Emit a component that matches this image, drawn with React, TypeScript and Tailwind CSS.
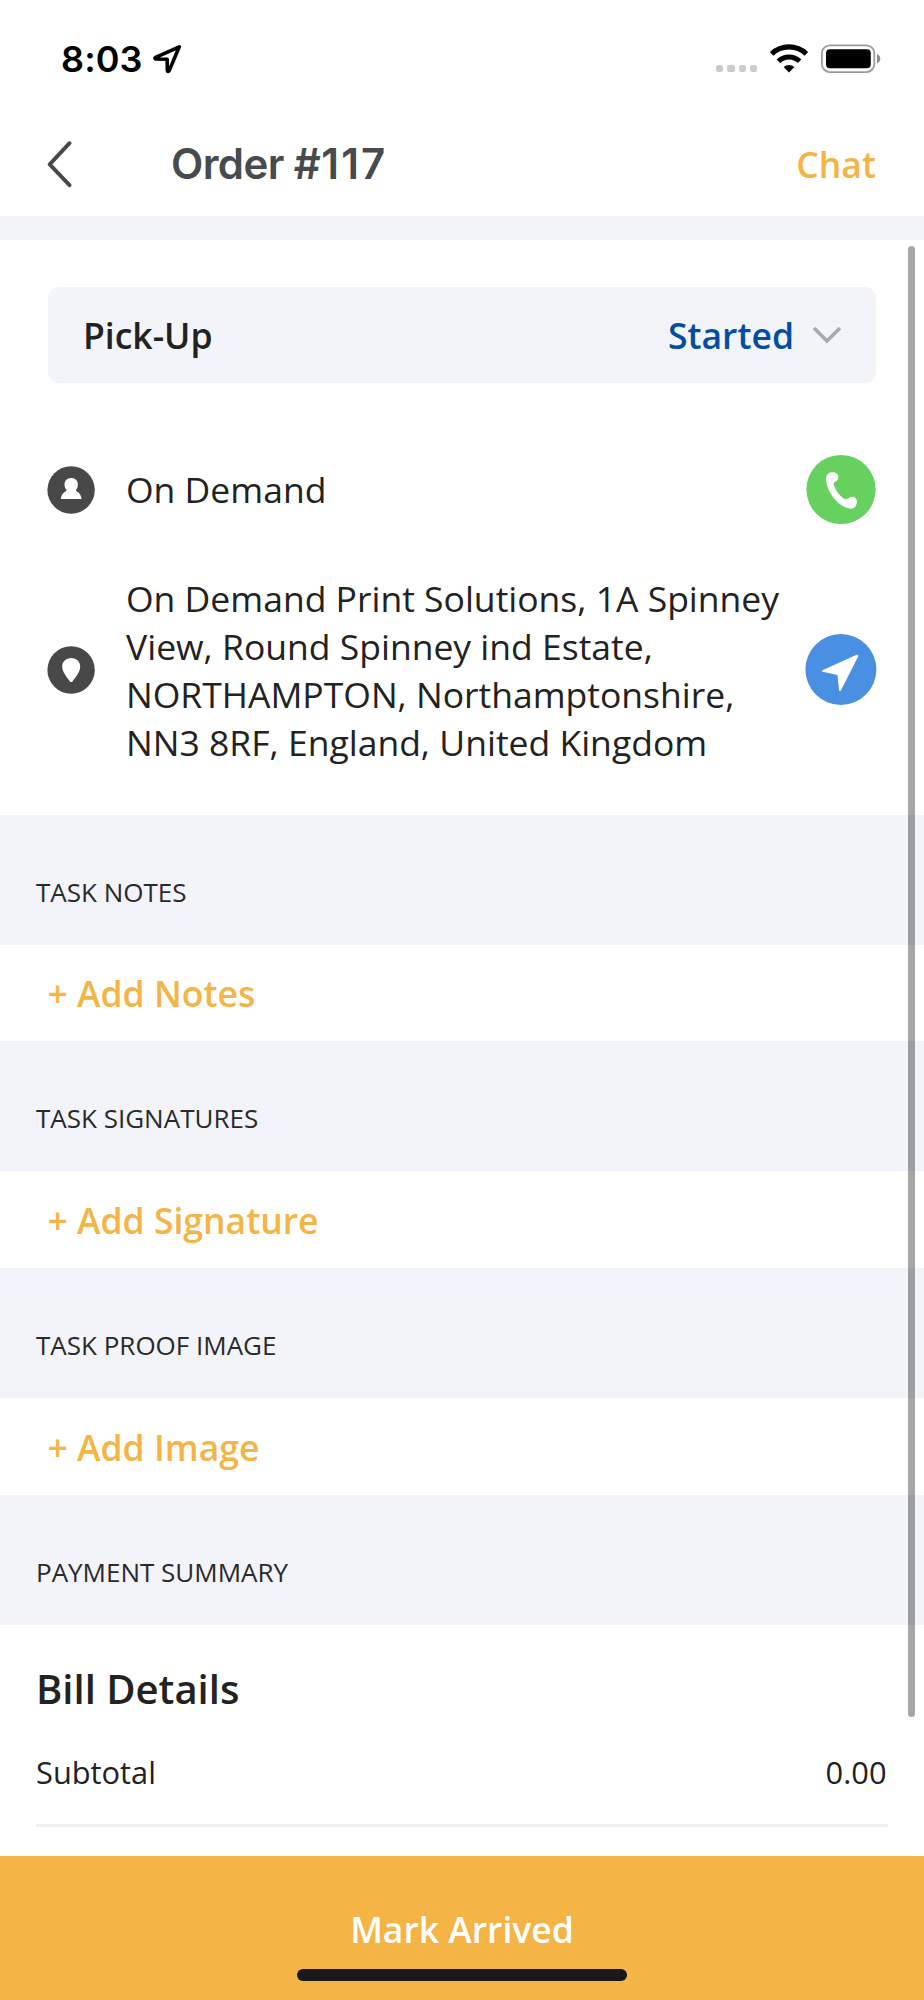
import { useState } from 'react'

interface TaskSection {
  title: string
  action: string
}

const SECTIONS: TaskSection[] = [
  { title: 'TASK NOTES', action: 'Add Notes' },
  { title: 'TASK SIGNATURES', action: 'Add Signature' },
  { title: 'TASK PROOF IMAGE', action: 'Add Image' },
]

function StatusBar() {
  return (
    <div className="flex h-[118px] items-center pl-[61px] pr-[43px] font-['Inter',sans-serif]">
      <span className="text-[36px] leading-none font-semibold tracking-[0.1px] text-black">8:03</span>
      <svg className="ml-[10px]" width="30" height="30" viewBox="0 0 30 30" fill="none">
        <path
          d="M26.3 2.8 2.6 13.3c-1 .6-.7 1.6.3 1.7l11.3.3.1 11c.1 1.3 1.3 1.4 1.9.3Z"
          stroke="#000"
          strokeWidth="3.6"
          strokeLinejoin="round"
        />
      </svg>

      <div className="ml-auto flex items-center">
        <div className="mt-[19px] flex gap-[4px]">
          {[0, 1, 2, 3].map(i => (
            <span key={i} className="h-[7px] w-[7.2px] rounded-[2.5px] bg-[#cbcbcb]" />
          ))}
        </div>
        <svg className="ml-[13px]" width="38" height="30" viewBox="0 0 38 30" fill="none" stroke="#000">
          <path d="M1.6 10a25 25 0 0 1 34.8 0" strokeWidth="5.2" />
          <path d="M8.4 17.2a15.4 15.4 0 0 1 21.2 0" strokeWidth="5" />
          <path d="M19 28.4l-5.4-5.4a8.2 8.2 0 0 1 10.8 0Z" fill="#000" stroke="none" />
        </svg>
        <svg className="ml-[13px]" width="60" height="30" viewBox="0 0 60 30">
          <rect x="0.9" y="1.3" width="52.4" height="26.8" rx="8" fill="none" stroke="#9b9b9b" strokeWidth="1.8" />
          <rect x="5" y="5.2" width="44.8" height="19" rx="4" fill="#000" />
          <path d="M56 10.2c4.4 1.5 4.4 7.5 0 9Z" fill="#8d8d8d" />
        </svg>
      </div>
    </div>
  )
}

function Header() {
  return (
    <header className="flex h-[98px] items-center pb-[7px] pl-[46px] pr-[48px]">
      <button type="button" aria-label="Back">
        <svg width="26" height="48" viewBox="0 0 26 48" fill="none">
          <path
            d="M23.5 3.2 3.7 24.4l19.8 20.8"
            stroke="#484848"
            strokeWidth="3.9"
            strokeLinecap="round"
            strokeLinejoin="round"
          />
        </svg>
      </button>
      <h1 className="ml-[99px] font-['Inter',sans-serif] text-[42px] leading-none font-semibold tracking-[-0.6px] text-[#484b4e]">
        Order #<span className="ml-[1px] tracking-[2.2px]">117</span>
      </h1>
      <button type="button" className="mt-[2px] ml-auto text-[35.5px] leading-none font-semibold text-[#f4b446]">
        Chat
      </button>
    </header>
  )
}

export default function App() {
  const [status] = useState('Started')

  return (
    <div className="relative flex h-[2000px] w-[924px] flex-col overflow-hidden bg-white font-['Open_Sans',sans-serif] text-[35.5px] text-[#222]">
      <StatusBar />
      <Header />
      <div className="h-[24px] shrink-0 bg-[#f3f4f9]" />

      <main className="flex-1">
        <div className="h-[574.5px] px-[48px] pt-[47px]">
          <div className="flex h-[96px] items-center rounded-[11px] bg-[#f3f4f9] pl-[35px] pr-[34px] font-semibold">
            <span className="pt-[2px]">Pick-Up</span>
            <span className="ml-auto pt-[2px] text-[#034ea2]">{status}</span>
            <svg className="ml-[18px]" width="30" height="20" viewBox="0 0 30 20" fill="none">
              <path d="m2 3 13 13L28 3" stroke="#a9a9a9" strokeWidth="3.6" />
            </svg>
          </div>

          <div className="mt-[71px] flex h-[71px] items-center">
            <svg className="shrink-0 overflow-visible" width="48" height="48" viewBox="0 0 48 48">
              <circle cx="23.1" cy="24" r="23.7" fill="#484848" />
              <path
                d="M23.2 12c-4.3 0-7 3-6.6 7.2.1 2 .8 3.6 1.9 4.6l-.3 1.2c-3 1.2-5 4.2-5.400 8h20.800c-.4-3.800-2.400-6.800-5.400-8l-.3-1.200c1.100-1 1.800-2.600 1.900-4.600.4-4.200-2.300-7.200-6.600-7.200Z"
                fill="#fff"
              />
            </svg>
            <span className="ml-[30px]">On Demand</span>
            <svg className="ml-auto" width="71" height="71" viewBox="0 0 71 71">
              <circle cx="36" cy="35.5" r="34.6" fill="#67d160" />
              <path
                d="M26 18.300c-3 .6-5 3-5 6.700 0 12 12.500 28.500 24.500 29.700 3.700.3 6.200-2.700 6.400-7.200.1-3.300-2.300-5-5.300-4.800-2.200.1-3.100 2.600-6 2.600-5-1.800-10.600-9.600-12.200-15.600 1-2 4.500-2.600 4.900-5.600.3-4.300-2.500-6.600-7.300-5.800Z"
                fill="#fff"
              />
            </svg>
          </div>

          <div className="mt-[48.5px] flex items-center">
            <svg className="shrink-0 overflow-visible" width="48" height="48" viewBox="0 0 48 48">
              <circle cx="23.1" cy="24" r="23.7" fill="#484848" />
              <path
                d="M23.200 12c-5.200 0-9 3.500-9 8.600 0 5.800 5 10.900 7.700 14.800.6.900 2 .9 2.600 0 2.700-3.900 7.700-9 7.700-14.800 0-5.100-3.800-8.600-9-8.600Z"
                fill="#fff"
              />
            </svg>
            <p className="ml-[30px] w-[670px] leading-[48.2px]">
              On Demand Print Solutions, 1A Spinney View, Round Spinney ind Estate, NORTHAMPTON, Northamptonshire,
              NN3 8RF, England, United Kingdom
            </p>
            <svg className="ml-auto shrink-0 overflow-visible" width="71" height="71" viewBox="0 0 71 71">
              <circle cx="35.9" cy="35.5" r="35.5" fill="#4990e2" />
              <path
                d="M51.6 20.800 17.500 36.200c-.8.4-.8 1.500.2 1.600l14.800 3.100 1.500 15.300c.2 1.100 1.300 1.200 1.900.2l17.400-34.200c.4-1-.7-1.900-1.700-1.400Z"
                fill="#fff"
              />
            </svg>
          </div>
        </div>

        {SECTIONS.map(section => (
          <section key={section.title}>
            <h2 className="flex h-[130.1px] items-center bg-[#f3f4f9] pl-[36px] pt-[25px] text-[26px] text-[#2a2a2a]">
              {section.title}
            </h2>
            <button
              type="button"
              className="flex h-[96.6px] w-full items-center pt-[2px] pl-[47.5px] font-semibold text-[#f4b446]"
            >
              + {section.action}
            </button>
          </section>
        ))}

        <section>
          <h2 className="flex h-[130.1px] items-center bg-[#f3f4f9] pl-[36px] pt-[25px] text-[26px] text-[#2a2a2a]">
            PAYMENT SUMMARY
          </h2>
          <div className="px-[36px] pt-[34px]">
            <h3 className="text-[40px] leading-[60px] font-semibold">Bill Details</h3>
            <div className="mt-[23px] flex h-[85px] items-start justify-between border-b-[3px] border-[#f0f0f0] pr-[1.5px] text-[30.8px] leading-[60px]">
              <span>Subtotal</span>
              <span>0.00</span>
            </div>
          </div>
        </section>
      </main>

      <button
        type="button"
        className="flex h-[144px] shrink-0 flex-col items-center bg-[#f4b446] pt-[43px] font-semibold text-white"
      >
        <span className="leading-[60px]">Mark Arrived</span>
        <span className="mt-[10px] h-[12px] w-[330px] rounded-full bg-[#191919]" />
      </button>

      {/* scroll indicator */}
      <div className="absolute top-[246px] right-[9.5px] h-[1471px] w-[7px] rounded-full bg-black/35" />
    </div>
  )
}
